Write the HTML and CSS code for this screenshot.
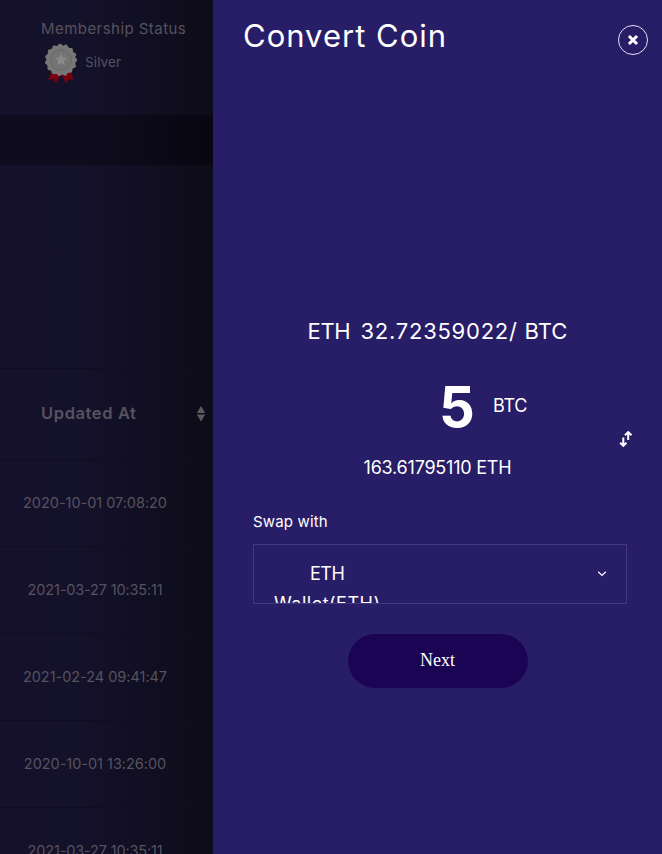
FILE: index.html
```html
<!DOCTYPE html>
<html lang="en">
<head>
<meta charset="utf-8">
<title>Convert Coin</title>
<link rel="stylesheet" href="styles.css">
</head>
<body>
<div class="page">
  <section class="account">
    <header class="membership">
      <div class="membership-title"><span>Membership Status</span></div>
      <div class="level">
        <svg class="medal" width="34" height="42" viewBox="0 0 34 42">
          <path fill="#770011" d="M8 27 4 37 9 36 12 40.5 17 31 22 40.5 25 36 30 37 26 27z"/>
          <circle cx="17" cy="17" r="14.2" fill="#777" stroke="#777" stroke-width="4" stroke-dasharray="0.1 5.85" stroke-linecap="round"/>
          <circle cx="17" cy="17" r="14.8" fill="#777"/>
          <circle cx="17" cy="17" r="10.5" fill="#747474" stroke="#686868" stroke-width="1"/>
          <path fill="#8a8a8a" d="m17 10.5 1.8 3.9 4.2.5-3.1 2.9.8 4.2-3.7-2.1-3.7 2.1.8-4.2-3.1-2.9 4.2-.5z"/>
        </svg>
        <span class="level-name">Silver</span>
      </div>
    </header>
    <div class="band"></div>
    <div class="spacer"></div>
    <div class="thead"><span class="updated">Updated At</span>
      <svg class="sort" width="10" height="16" viewBox="0 0 10 16"><path fill="#5d5a5d" d="M5 0 9.2 7H.8zM5 15.4.8 8.4h8.4z"/></svg>
    </div>
    <div class="row"><span>2020-10-01 07:08:20</span></div>
    <div class="row narrow"><span>2021-03-27 10:35:11</span></div>
    <div class="row"><span>2021-02-24 09:41:47</span></div>
    <div class="row"><span>2020-10-01 13:26:00</span></div>
    <div class="row narrow"><span>2021-03-27 10:35:11</span></div>
  </section>
  <aside class="panel">
    <header class="panel-head">
      <h1>Convert Coin</h1>
      <button class="close" aria-label="Close"><svg width="12" height="12" viewBox="0 0 12 12"><path d="m3 3 6 6M9 3 3 9" stroke="#fff" stroke-width="3" stroke-linecap="square" fill="none"/></svg></button>
    </header>
    <div class="rate"><span class="coin">ETH</span><span class="value">32.72359022/</span><span class="base">BTC</span></div>
    <div class="amount"><strong>5</strong><span>BTC</span></div>
    <div class="switch"><svg width="15" height="18" viewBox="0 0 15 18"><path d="M4.3 7.5v8M1.2 12.7l3.1 3.1 3.1-3.1M9.2 10V2.5M6 5.2l3.2-3.1 3.3 3.1" fill="none" stroke="#fff" stroke-width="2"/></svg></div>
    <div class="result"><span>163.61795110 ETH</span></div>
    <label class="swap"><span>Swap with</span></label>
    <div class="select">
      <div class="option"><div class="symbol">ETH</div><div class="wallet">Wallet(ETH)</div></div>
      <svg class="chevron" width="10" height="6" viewBox="0 0 10 6"><path d="m1.2.8 3.8 3.7L8.8.8" fill="none" stroke="#fff" stroke-width="1.2"/></svg>
    </div>
    <button class="next">Next</button>
  </aside>
</div>
</body>
</html>
```
FILE: styles.css
```css
* { box-sizing: border-box; }
body { margin: 0; font-family: Inter, "Liberation Sans", sans-serif; }
button { font: inherit; color: inherit; padding: 0; }
svg { display: block; }
.page { display: flex; width: 662px; height: 854px; overflow: hidden; background: #281d67; }
.account { width: 213px; flex: none; overflow: hidden; color: #57525f; background: linear-gradient(90deg, #15112c 0%, #14112a 38%, #0d0c19 100%); }
.membership { height: 115px; padding: 19px 0 0 41px; }
.membership-title { font-size: 15px; line-height: 20px; letter-spacing: 0.45px; white-space: nowrap; }
.level { display: flex; align-items: center; margin: 4px 0 0 3px; gap: 7px; }
.level-name { font-size: 13.5px; line-height: 20px; margin-top: -5px; letter-spacing: 0.1px; }
.band { height: 50px; background: linear-gradient(90deg, #100c20, #0e0b1c 50%, #080611); }
.spacer { height: 203px; }
.thead { height: 92px; padding-left: 41px; border-top: 1px solid #100d20; border-bottom: 1px solid #100d20; display: flex; align-items: center; font-size: 16.5px; font-weight: 600; letter-spacing: 0.6px; }
.updated { width: 155px; margin-top: -2px; }
.row { height: 87px; padding: 0 23px 2px 0; border-bottom: 1px solid #100d20; display: flex; align-items: center; justify-content: center; font-size: 14.5px; white-space: nowrap; letter-spacing: -0.03px; }
.narrow { letter-spacing: -0.15px; }
.panel { width: 449px; display: flex; flex-direction: column; align-items: center; color: #fff; background: #281d67; }
.panel-head { width: 100%; height: 55px; padding: 0 14px 0 30px; display: flex; justify-content: space-between; }
h1 { margin: 16px 0 0; font-size: 31px; line-height: 40px; font-weight: 400; letter-spacing: 1px; white-space: nowrap; }
.close { width: 30px; height: 30px; margin-top: 25px; display: grid; place-items: center; border: 1px solid #e5e2f2; border-radius: 50%; background: none; }
.rate { width: 260px; height: 30px; margin-top: 261px; display: flex; align-items: center; font-size: 22px; white-space: nowrap; }
.coin { width: 53px; letter-spacing: -0.3px; }
.value { width: 164px; letter-spacing: 0.75px; }
.base { letter-spacing: 0; }
.amount { width: 449px; height: 60px; margin-top: 31px; padding-left: 226px; display: flex; align-items: center; }
.amount strong { width: 54px; font-size: 56px; line-height: 60px; font-weight: 700; }
.amount span { font-size: 18px; letter-spacing: -0.3px; margin-top: -3px; }
.switch { align-self: flex-end; height: 18px; margin: -7px 28px 0 0; }
.result { height: 24px; margin-top: 8px; font-size: 18px; line-height: 24px; letter-spacing: -0.22px; }
.swap { align-self: flex-start; margin: 32px 0 0 40px; font-size: 15px; line-height: 20px; letter-spacing: 0.15px; }
.select { width: 374px; height: 60px; margin: 12px 0 0 5px; padding: 14px 20px 0; border: 1px solid #44397d; display: flex; justify-content: space-between; overflow: hidden; }
.option { font-size: 18px; line-height: 30px; letter-spacing: -0.5px; white-space: nowrap; }
.symbol { padding-left: 36px; }
.wallet { letter-spacing: 0.5px; }
.chevron { margin-top: 12px; margin-right: -1px; }
.next { width: 180px; height: 54px; margin-top: 30px; border: 0; border-radius: 27px; background: #1c0454; color: #fff; font: 18px/26px "Liberation Serif", serif; padding-bottom: 2px; }
```
